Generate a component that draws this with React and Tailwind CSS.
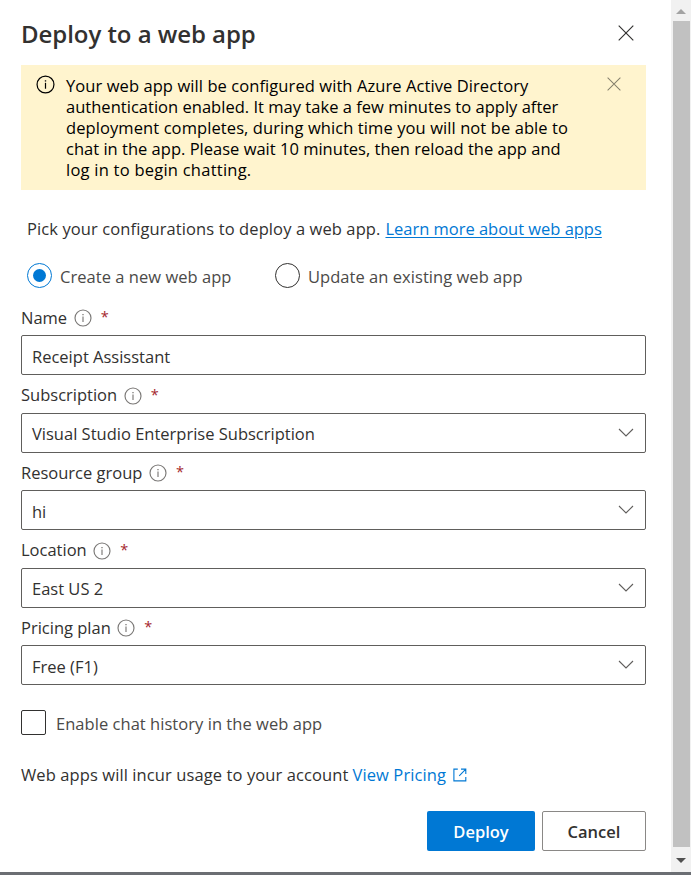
import React from "react";

function InfoIcon({ className }) {
  return (
    <svg viewBox="0 0 18 18" className={className} fill="none" stroke="currentColor">
      <circle cx="9" cy="9" r="8" strokeWidth="1.15" />
      <path d="M9 7.4V13" strokeWidth="1.15" />
      <path d="M9 5V6.2" strokeWidth="1.3" />
    </svg>
  );
}

function CloseIcon({ className }) {
  return (
    <svg viewBox="0 0 16 16" className={className} fill="none" stroke="currentColor" strokeWidth="1.15">
      <path d="M.7.7 15.3 15.3M15.3.7.7 15.3" />
    </svg>
  );
}

function Chevron() {
  return (
    <svg viewBox="0 0 16 9" className="mb-[2px] h-[9px] w-4 text-[#605e5c]" fill="none" stroke="currentColor" strokeWidth="1.1">
      <path d="M1 1 8 8 15 1" />
    </svg>
  );
}

function Field({ label, labelClass = "leading-[35px]", valueClass = "pt-[3px]", value, select, className }) {
  return (
    <div className={className}>
      <div className="flex h-[35px] items-start text-[#323130]">
        <span className={labelClass}>{label}</span>
        <InfoIcon className="ml-[6.5px] mt-[9px] h-[18px] w-[18px] text-[#7a7876]" />
        <span className="ml-[9px] text-[14.5px] leading-[34px] text-[#a4262c]">*</span>
      </div>
      <div className="flex h-10 items-center justify-between rounded-[2px] border border-[#605e5c] pl-[10px] pr-[11px] text-[#323130]">
        <span className={valueClass}>{value}</span>
        {select && <Chevron />}
      </div>
    </div>
  );
}

function Scrollbar() {
  return (
    <div className="flex w-5 flex-col items-center bg-[#f1f1f1]">
      <div className="flex h-[21px] items-center pt-[2px]">
        <svg viewBox="0 0 10 5" className="h-[5px] w-[10px]" fill="#a3a3a3"><path d="M0 5 5 0l5 5z" /></svg>
      </div>
      <div className="h-[826px] w-[17px] bg-[#c1c1c1]" />
      <div className="flex h-[25px] items-center pt-[1px]">
        <svg viewBox="0 0 10 5" className="h-[5px] w-[10px]" fill="#505050"><path d="M0 0h10L5 5z" /></svg>
      </div>
    </div>
  );
}

export default function App() {
  return (
    <div className="flex h-[875px] w-[691px] flex-col overflow-hidden bg-white font-['Open_Sans',sans-serif] text-[16.5px] whitespace-nowrap">
      <div className="flex h-[872px]">
        <main className="flex w-[671px] flex-col pl-[21px] pr-[25px]">
          <header className="flex h-[65px] items-start justify-between pr-[12px]">
            <h1 className="pt-[18px] text-[24px] leading-[32px] font-semibold tracking-[-0.05px] text-[#323130]">Deploy to a web app</h1>
            <CloseIcon className="mt-[25px] h-4 w-4 text-[#323130]" />
          </header>

          <div className="flex h-[125px] items-start bg-[#fff4ce] text-black">
            <InfoIcon className="ml-[15px] mt-[10px] h-[19px] w-[19px]" />
            <div className="ml-[11px] flex flex-1 flex-col pt-[10px] leading-[21px]">
              <span className="tracking-[0.08px]">Your web app will be configured with Azure Active Directory</span>
              <span className="tracking-[0.02px]">authentication enabled. It may take a few minutes to apply after</span>
              <span className="tracking-[0.09px]">deployment completes, during which time you will not be able to</span>
              <span className="tracking-[0.01px]">chat in the app. Please wait 10 minutes, then reload the app and</span>
              <span className="tracking-[0.24px]">log in to begin chatting.</span>
            </div>
            <CloseIcon className="mr-[25px] mt-[12px] h-[14px] w-[14px] text-[#857f6c]" />
          </div>

          <div className="mt-[26px] flex h-[26px] items-center pl-[6px] text-[#323130]">
            <span className="tracking-[0.1px]">Pick your configurations to deploy a web app.</span>
            <a className="ml-[5px] tracking-[-0.02px] text-[#0078d4] underline underline-offset-2">Learn more about web apps</a>
          </div>

          <div className="mt-[21px] flex h-[25px] items-center pl-[6px] tracking-[0.04px] text-[#4b4a48]">
            <span className="flex h-[25px] w-[25px] items-center justify-center rounded-full border border-[#0078d4]">
              <span className="h-[13px] w-[13px] rounded-full bg-[#0078d4]" />
            </span>
            <span className="ml-2 w-[171px] pt-[3px]">Create a new web app</span>
            <span className="ml-11 h-[25px] w-[25px] rounded-full border border-[#323130]" />
            <span className="ml-2 pt-[3px]">Update an existing web app</span>
          </div>

          <Field label="Name" value="Receipt Assisstant" valueClass="pt-[4px]" className="mt-[12px]" />
          <Field label="Subscription" labelClass="leading-[33px]" value="Visual Studio Enterprise Subscription" select className="mt-[3px]" />
          <Field label="Resource group" value="hi" valueClass="pt-[4px]" select className="mt-[2px]" />
          <Field label="Location" labelClass="leading-[33px]" value="East US 2" select className="mt-[3px]" />
          <Field label="Pricing plan" value="Free (F1)" valueClass="pt-[4px]" select className="mt-[2px]" />

          <div className="mt-[25px] flex h-[25px] items-center text-[#4b4a48]">
            <span className="h-[25px] w-[25px] rounded-[2px] border border-[#323130]" />
            <span className="ml-[10px] pt-[3px] tracking-[0.04px]">Enable chat history in the web app</span>
          </div>

          <div className="mt-[27px] flex h-[26px] items-center text-[#323130]">
            <span className="tracking-[0.1px]">Web apps will incur usage to your account</span>
            <a className="ml-[4px] tracking-[0.1px] text-[#0078d4]">View Pricing</a>
            <svg viewBox="0 0 14 14" className="ml-[7px] h-[14px] w-[14px] text-[#0078d4]" fill="none" stroke="currentColor" strokeWidth="1.1">
              <path d="M4.8 1.1H.9v11.8h11.9V9M8 1.1h4.8V6M12.8 1.1 6.2 7.8" />
            </svg>
          </div>

          <div className="mt-[23px] flex justify-end gap-[7px] font-semibold">
            <button className="h-10 w-[108px] rounded-[2px] bg-[#0078d4] pt-[2px] text-white">Deploy</button>
            <button className="h-10 w-[104px] rounded-[2px] border border-[#8a8886] pt-[2px] text-[#323130]">Cancel</button>
          </div>
        </main>
        <Scrollbar />
      </div>
      <div className="h-[3px] bg-[#6b6e73]" />
    </div>
  );
}
